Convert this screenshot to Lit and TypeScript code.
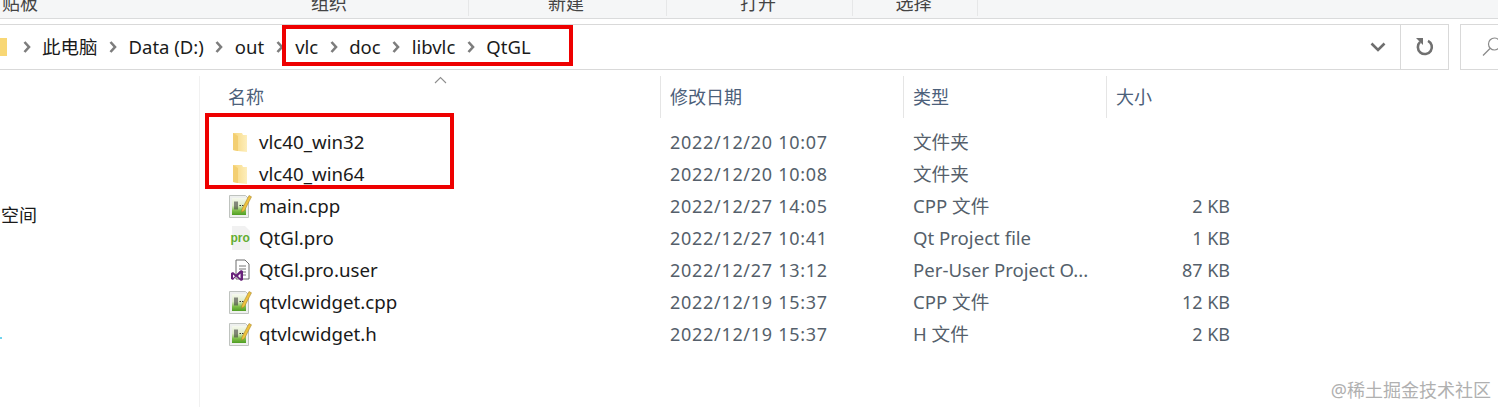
import { LitElement, html, css } from "lit";
import { customElement } from "lit/decorators.js";

const folderIcon = html`<svg class="ico" width="23" height="24" viewBox="0 0 23 24">
  <defs><linearGradient id="fg" x1="0" y1="0" x2="1" y2="0"><stop offset="0" stop-color="#f7d77e"/><stop offset="1" stop-color="#fdeebc"/></linearGradient></defs>
  <path d="M4 3h9l1 2h4v17l-9-1-5-1z" fill="url(#fg)"/><path d="M4 3v17l5 1V6z" fill="#f3cf72"/></svg>`;

const cppIcon = html`<svg class="ico" width="23" height="24" viewBox="0 0 23 24">
  <defs><linearGradient id="cg" x1="0" y1="0" x2="0" y2="1"><stop offset="0" stop-color="#f6f9ee"/><stop offset=".45" stop-color="#dcebc4"/><stop offset=".75" stop-color="#7cbd45"/><stop offset="1" stop-color="#4f9e24"/></linearGradient></defs>
  <path d="M.5 1.500h16l3 3v19H.5z" fill="#eef0ee" stroke="#bfc3bf"/>
  <path d="M3 4h14v17H3z" fill="url(#cg)"/>
  <path d="M6 7.500v8M8 7.500v8M10.500 11.500h1.500M13 11.500h1.500" stroke="#333" stroke-width="1.100"/>
  <path d="M13 15L20 1.500l2.500 1.300L15.500 16.500l-3 1.800z" fill="#eec23f" stroke="#9a7a22" stroke-width=".5"/></svg>`;

const proIcon = html`<svg class="ico" width="23" height="24" viewBox="0 0 23 24">
  <path d="M3 0h13l5 5v19H3z" fill="#f1f1f1"/><text x="1.500" y="16" class="pro">pro</text></svg>`;

const userIcon = html`<svg class="ico" width="23" height="24" viewBox="0 0 23 24">
  <path d="M7 2h9l4 4v15H7z" fill="#fff" stroke="#6d6d6d"/>
  <path d="M10 8h7M10 11h7M10 14h7M13 17h4" stroke="#777"/>
  <path d="M2 15l2-1 3 2.500L12 12l2 1v9l-2 1-5-4.500L4 22l-2-1zM4 16.500v3.500l2-1.800zM11.500 15.500L9 18l2.500 2.500z" fill="#68217a"/></svg>`;

const crumbs = ["此电脑", "Data (D:)", "out", "vlc", "doc", "libvlc", "QtGL"];
const ribbon = [
  { label: "贴板", w: 193, cls: "first" },
  { label: "组织", w: 276, cls: "" },
  { label: "新建", w: 198, cls: "" },
  { label: "打开", w: 186, cls: "" },
  { label: "选择", w: 125, cls: "" },
];
const rows = [
  { icon: folderIcon, name: "vlc40_win32", date: "2022/12/20 10:07", type: "文件夹", size: "" },
  { icon: folderIcon, name: "vlc40_win64", date: "2022/12/20 10:08", type: "文件夹", size: "" },
  { icon: cppIcon, name: "main.cpp", date: "2022/12/27 14:05", type: "CPP 文件", size: "2 KB" },
  { icon: proIcon, name: "QtGl.pro", date: "2022/12/27 10:41", type: "Qt Project file", size: "1 KB" },
  { icon: userIcon, name: "QtGl.pro.user", date: "2022/12/27 13:12", type: "Per-User Project O...", size: "87 KB" },
  { icon: cppIcon, name: "qtvlcwidget.cpp", date: "2022/12/19 15:37", type: "CPP 文件", size: "12 KB" },
  { icon: cppIcon, name: "qtvlcwidget.h", date: "2022/12/19 15:37", type: "H 文件", size: "2 KB" },
];

@customElement("app-root")
export class AppRoot extends LitElement {
  static styles = css`
    :host {
      display: block;
      position: relative;
      width: 1498px;
      height: 407px;
      overflow: hidden;
      background: #fff;
      font-family: "Noto Sans", "Noto Sans CJK SC", sans-serif;
      font-size: 18px;
      color: #1a1a1a;
    }
    .ribbon {
      display: flex;
      height: 19px;
      box-sizing: border-box;
      background: #f5f6f7;
      border-bottom: 1px solid #dadbdc;
      overflow: hidden;
      align-items: flex-start;
    }
    .rcell {
      flex: none;
      box-sizing: border-box;
      margin-top: -12px;
      height: 28px;
      line-height: 30px;
      text-align: center;
      padding-right: 3px;
      border-right: 1px solid #e6e7e8;
      color: #444;
      font-size: 18px;
      overflow: hidden;
    }
    .rcell.first { text-align: left; padding-left: 2px; border-right: none; }
    .addr-row {
      display: flex;
      margin-top: 5px;
      height: 46px;
      gap: 11px;
    }
    .addr {
      flex: none;
      width: 1449px;
      box-sizing: border-box;
      display: flex;
      align-items: center;
      border: 1px solid #d9d9d9;
      border-left: none;
    }
    .crumbs { flex: 1; display: flex; align-items: center; height: 100%; }
    .crumb-folder { margin-right: 4px; flex: none; }
    .crumb { line-height: 44px; white-space: nowrap; font-size: 18.500px; }
    .sep { flex: none; margin: 0 11.500px; }
    .dd { flex: none; margin-right: 14px; }
    .refresh {
      flex: none;
      width: 47px;
      height: 100%;
      display: flex;
      align-items: center;
      justify-content: center;
      border-left: 1px solid #d9d9d9;
    }
    .search {
      flex: 1;
      box-sizing: border-box;
      border: 1px solid #d9d9d9;
      border-right: none;
      display: flex;
      align-items: center;
      padding-left: 21px;
    }
    .body { display: flex; margin-top: 6px; }
    .side {
      flex: none;
      width: 199px;
      height: 332px;
      border-right: 1px solid #f1f1f1;
      box-sizing: content-box;
      position: relative;
    }
    .side-label { margin-top: 125px; line-height: 28px; padding-left: 1px; }
    .dot {
      position: absolute;
      left: 0;
      top: 261px;
      width: 2px;
      height: 2px;
      background: #6fd3ee;
    }
    .list { flex: 1; }
    .grid {
      display: grid;
      grid-template-columns: 460px 243px 203px 135px;
    }
    .head { height: 40px; position: relative; margin-bottom: 10px; }
    .hcell {
      box-sizing: border-box;
      line-height: 42px;
      padding-left: 9px;
      color: #4c607a;
      border-left: 1px solid #e5e5e5;
    }
    .hcell:first-child { border-left: none; padding-left: 28px; }
    .hcell:last-child { border-right: 1px solid #e5e5e5; }
    .caret { position: absolute; left: 234px; top: 0; }
    .row { height: 32px; line-height: 32px; align-items: center; }
    .name { display: flex; align-items: center; padding-left: 29px; white-space: nowrap; font-size: 18.700px; }
    .ico { flex: none; margin-right: 7px; }
    .pro { font: bold 12px "Liberation Sans", sans-serif; fill: #62ad32; }
    .date, .type { color: #555f6b; padding-left: 10px; white-space: nowrap; }
    .date { letter-spacing: 0.700px; }
    .type { font-size: 18.600px; }
    .size { color: #555f6b; text-align: right; padding-right: 11px; }
    .mark {
      position: absolute;
      box-sizing: border-box;
      border: 4px solid #ee0000;
      pointer-events: none;
    }
    .mark.path { left: 282px; top: 25px; width: 291px; height: 41px; }
    .mark.files { left: 205px; top: 113px; width: 249px; height: 76px; }
    .wm {
      position: absolute;
      right: 7px;
      top: 378px;
      font-size: 18px;
      line-height: 24px;
      color: #b0b0b0;
      white-space: nowrap;
    }
  `;

  private chev() {
    return html`<svg class="sep" width="8" height="14" viewBox="0 0 8 14"><path d="M1.500 2l4.500 5-4.500 5" fill="none" stroke="#7d7d7d" stroke-width="2.600"/></svg>`;
  }

  render() {
    return html`
      <div class="ribbon">
        ${ribbon.map((r) => html`<div class="rcell ${r.cls}" style="width:${r.w}px">${r.label}</div>`)}
      </div>
      <div class="addr-row">
        <div class="addr">
          <div class="crumbs">
            <svg class="crumb-folder" width="7" height="20" viewBox="0 0 7 20"><path d="M0 1h7v18H0z" fill="#f8d775"/></svg>
            ${crumbs.map((c) => html`${this.chev()}<span class="crumb">${c}</span>`)}
          </div>
          <svg class="dd" width="16" height="10" viewBox="0 0 16 10"><path d="M1.500 1.500L8 8l6.500-6.500" fill="none" stroke="#6e6e6e" stroke-width="2.600"/></svg>
          <div class="refresh">
            <svg width="20" height="20" viewBox="0 0 20 20"><path d="M6 4.300A7 7 0 1 0 14 4.300" fill="none" stroke="#707070" stroke-width="2.600" transform="rotate(-8 10 11)"/><path d="M1 1h7v7z" fill="#707070"/></svg>
          </div>
        </div>
        <div class="search">
          <svg width="20" height="20" viewBox="0 0 20 20"><circle cx="12.500" cy="7" r="6" fill="none" stroke="#8a8a8a" stroke-width="1.200"/><path d="M8 11.500L1 18.500" stroke="#8a8a8a" stroke-width="1.300"/></svg>
        </div>
      </div>
      <div class="body">
        <div class="side">
          <div class="side-label">空间</div>
          <div class="dot"></div>
        </div>
        <div class="list">
          <div class="grid head">
            <div class="hcell">名称</div>
            <div class="hcell">修改日期</div>
            <div class="hcell">类型</div>
            <div class="hcell">大小</div>
            <svg class="caret" width="13" height="8" viewBox="0 0 13 8"><path d="M1 7l5.500-5.500L12 7" fill="none" stroke="#8e8e8e" stroke-width="1.100"/></svg>
          </div>
          ${rows.map(
            (r) => html`<div class="grid row">
              <div class="name">${r.icon}<span>${r.name}</span></div>
              <div class="date">${r.date}</div>
              <div class="type">${r.type}</div>
              <div class="size">${r.size}</div>
            </div>`
          )}
        </div>
      </div>
      <div class="mark path"></div>
      <div class="mark files"></div>
      <div class="wm">@稀土掘金技术社区</div>
    `;
  }
}
